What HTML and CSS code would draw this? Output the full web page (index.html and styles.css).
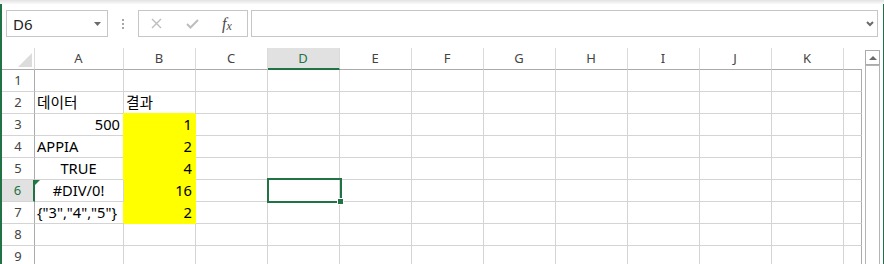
FILE: index.html
```html
<!DOCTYPE html>
<html lang="ko">
<head>
    <meta charset="UTF-8">
    <meta name="viewport" content="width=device-width, initial-scale=1.0">
    <title>Book1 - Excel</title>
    <link rel="stylesheet" href="styles.css">
</head>
<body>
    <div class="shade"></div>
    <div class="app">
        <!-- formula bar -->
        <div class="formula-bar">
            <div class="name-box">
                <span>D6</span>
                <svg class="drop" width="7" height="4" viewBox="0 0 7 4"><polygon points="0,0 7,0 3.5,4" fill="#6b6b6b"/></svg>
            </div>
            <div class="grip"><i></i><i></i><i></i></div>
            <div class="fn-box">
                <svg class="ico-x" width="11" height="11" viewBox="0 0 11 11"><path d="M1 1 L10 10 M10 1 L1 10" stroke="#bdbdbd" stroke-width="1.4" fill="none"/></svg>
                <svg class="ico-ok" width="13" height="10" viewBox="0 0 13 10"><path d="M1 5 L4.5 8.5 L12 1" stroke="#bdbdbd" stroke-width="2" fill="none"/></svg>
                <span class="fx">f<small>x</small></span>
            </div>
            <div class="input-box">
                <svg width="8" height="6" viewBox="0 0 8 6"><path d="M1 1 L4 4 L7 1" stroke="#6b6b6b" stroke-width="2" fill="none"/></svg>
            </div>
        </div>

        <!-- sheet -->
        <div class="sheet">
            <div class="grid">
                <div class="row head">
                    <div class="rh corner"><span class="tri"></span></div>
                    <div class="a">A</div><div>B</div><div>C</div><div class="on">D</div><div>E</div>
                    <div>F</div><div>G</div><div>H</div><div>I</div><div>J</div><div>K</div><div class="l"></div>
                </div>
                <div class="row">
                    <div class="rh">1</div>
                    <div class="a"></div><div></div><div></div><div></div><div></div>
                    <div></div><div></div><div></div><div></div><div></div><div></div><div class="l"></div>
                </div>
                <div class="row">
                    <div class="rh">2</div>
                    <div class="a">데이터</div><div>결과</div><div></div><div></div><div></div>
                    <div></div><div></div><div></div><div></div><div></div><div></div><div class="l"></div>
                </div>
                <div class="row">
                    <div class="rh">3</div>
                    <div class="a r">500</div><div class="fill r">1</div><div></div><div></div><div></div>
                    <div></div><div></div><div></div><div></div><div></div><div></div><div class="l"></div>
                </div>
                <div class="row">
                    <div class="rh">4</div>
                    <div class="a">APPIA</div><div class="fill r">2</div><div></div><div></div><div></div>
                    <div></div><div></div><div></div><div></div><div></div><div></div><div class="l"></div>
                </div>
                <div class="row">
                    <div class="rh">5</div>
                    <div class="a ctr">TRUE</div><div class="fill r">4</div><div></div><div></div><div></div>
                    <div></div><div></div><div></div><div></div><div></div><div></div><div class="l"></div>
                </div>
                <div class="row">
                    <div class="rh on">6</div>
                    <div class="a ctr err">#DIV/0!</div><div class="fill r">16</div><div></div>
                    <div class="active"><span class="sel-box"><span class="handle"></span></span></div><div></div>
                    <div></div><div></div><div></div><div></div><div></div><div></div><div class="l"></div>
                </div>
                <div class="row">
                    <div class="rh">7</div>
                    <div class="a">{"3","4","5"}</div><div class="fill r">2</div><div></div><div></div><div></div>
                    <div></div><div></div><div></div><div></div><div></div><div></div><div class="l"></div>
                </div>
                <div class="row">
                    <div class="rh">8</div>
                    <div class="a"></div><div></div><div></div><div></div><div></div>
                    <div></div><div></div><div></div><div></div><div></div><div></div><div class="l"></div>
                </div>
                <div class="row">
                    <div class="rh">9</div>
                    <div class="a"></div><div></div><div></div><div></div><div></div>
                    <div></div><div></div><div></div><div></div><div></div><div></div><div class="l"></div>
                </div>
            </div>
            <div class="vscroll">
                <div class="up"><span class="arrow"></span></div>
                <div class="thumb"></div>
            </div>
        </div>
    </div>
</body>
</html>
```

FILE: styles.css
```css
html, body {
    margin: 0;
}
body {
    width: 884px;
    height: 264px;
    overflow: hidden;
    background: #ffffff;
    font-family: "Noto Sans", "Noto Sans CJK KR", sans-serif;
    color: #000000;
}
.shade {
    height: 4px;
    background: linear-gradient(#e2e2e2, #fafafa);
}
.app {
    height: 260px;
    box-sizing: border-box;
    border-left: 2px solid #217346;
    border-right: 1px solid #217346;
    overflow: hidden;
}

/* formula bar */
.formula-bar {
    display: flex;
    height: 27px;
    margin: 6px 0 11px 4px;
}
.name-box {
    width: 102px;
    box-sizing: border-box;
    border: 1px solid #c6c6c6;
    display: flex;
    align-items: center;
    justify-content: space-between;
    padding: 0 6px;
    font-size: 15px;
    color: #222222;
}
.grip {
    width: 30px;
    display: flex;
    flex-direction: column;
    align-items: center;
    justify-content: center;
    gap: 2px;
}
.grip i {
    width: 2px;
    height: 2px;
    background: #a6a6a6;
}
.fn-box {
    width: 110px;
    box-sizing: border-box;
    border: 1px solid #c6c6c6;
    display: flex;
    align-items: center;
    padding-left: 12px;
}
.ico-ok {
    margin-left: 24px;
}
.fx {
    margin-left: 23px;
    font-family: "Liberation Serif", serif;
    font-style: italic;
    font-size: 16px;
    color: #4a4a4a;
}
.fx small {
    font-size: 12px;
    position: relative;
    top: 1px;
}
.input-box {
    flex: 1;
    box-sizing: border-box;
    margin: 0 5px 0 3px;
    border: 1px solid #c6c6c6;
    display: flex;
    align-items: center;
    justify-content: flex-end;
    padding-right: 3px;
}

/* sheet */
.sheet {
    display: flex;
    height: 216px;
    overflow: hidden;
}
.grid {
    width: 860px;
}
.row {
    display: flex;
    height: 22px;
}
.row > div {
    flex: none;
    width: 72px;
    height: 22px;
    box-sizing: border-box;
    border-right: 1px solid #d4d4d4;
    border-bottom: 1px solid #d4d4d4;
    padding: 0 3px 0 2px;
    font-size: 14.67px;
    line-height: 21px;
    white-space: nowrap;
    overflow: hidden;
}
.row > .a {
    width: 89px;
}
.row > .l {
    width: 18px;
    border-right-color: #ababab;
}
.row > .rh {
    width: 33px;
    padding: 0;
    border-right-color: #ababab;
    text-align: center;
    font-size: 13px;
    color: #444444;
}
.row > .rh.on {
    background: #e1e1e1;
    border-right: 2px solid #217346;
    color: #217346;
}
.head > div {
    border-bottom-color: #ababab;
    border-right-color: #dadada;
    text-align: center;
    font-size: 13px;
    color: #444444;
}
.head > .rh {
    border-right-color: #dadada;
}
.head > .l {
    border-right: 0;
}
.head > .on {
    background: #e1e1e1;
    border-bottom: 2px solid #217346;
    color: #217346;
}
.corner {
    display: flex;
    align-items: flex-end;
    justify-content: flex-end;
}
.corner .tri {
    width: 14px;
    height: 14px;
    margin: 0 2px 2px 0;
    background: #dcdcdc;
    clip-path: polygon(100% 0, 100% 100%, 0 100%);
}
.row > .r {
    text-align: right;
}
.row > .ctr {
    text-align: center;
}
.row > .fill {
    background: #ffff00;
    border-color: #ffff00;
    box-shadow: -1px -1px 0 #ffff00;
}
.row > .err {
    position: relative;
}
.err::before {
    content: "";
    position: absolute;
    left: 0;
    top: -1px;
    border-top: 6px solid #1e7b45;
    border-right: 6px solid transparent;
}
.row > .active {
    position: relative;
    overflow: visible;
}
.sel-box {
    position: absolute;
    left: -1px;
    top: -2px;
    width: 75px;
    height: 25px;
    box-sizing: border-box;
    border: 2px solid #217346;
}
.handle {
    position: absolute;
    right: -4px;
    bottom: -4px;
    width: 5px;
    height: 5px;
    background: #217346;
    border: 1px solid #ffffff;
}

/* vertical scrollbar */
.vscroll {
    width: 15px;
    margin: 2px 3px 0 3px;
}
.up {
    height: 15px;
    box-sizing: border-box;
    border: 1px solid #ababab;
    display: flex;
    align-items: center;
    justify-content: center;
}
.arrow {
    width: 0;
    height: 0;
    border-left: 4px solid transparent;
    border-right: 4px solid transparent;
    border-bottom: 4px solid #6a6a6a;
}
.thumb {
    height: 220px;
    border: 1px solid #b4b4b4;
}
```
